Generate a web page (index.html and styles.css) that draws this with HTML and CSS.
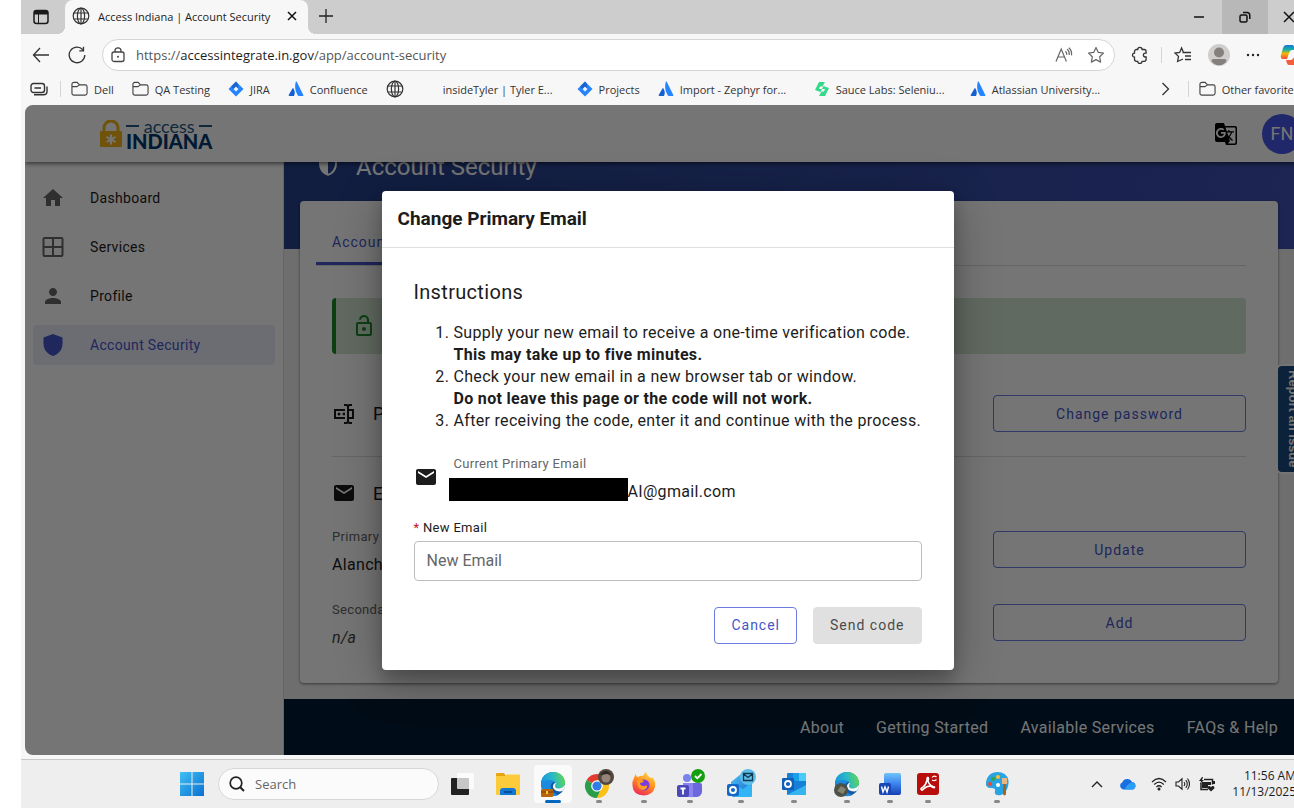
FILE: index.html
```
<!DOCTYPE html>
<html lang="en">
<head>
	<meta charset="UTF-8">
	<title>Access Indiana | Account Security</title>
	<link rel="stylesheet" href="styles.css">
</head>
<body>
	<!-- shared symbols -->
	<svg class="defs" aria-hidden="true">
		<symbol id="globe" viewBox="0 0 18 18"><g fill="none" stroke="#333" stroke-width="1.2"><circle cx="9" cy="9" r="7.8"/><ellipse cx="9" cy="9" rx="3.6" ry="7.8"/><path d="M9 1v16M1.8 6h14.4M1.8 12h14.4"/></g></symbol>
		<symbol id="folder" viewBox="0 0 18 16"><path d="M1 12.500V3a2 2 0 0 1 2-2h3.500l2.500 2.600h6a2 2 0 0 1 2 2v6.900a2 2 0 0 1-2 2H3a2 2 0 0 1-2-2zM1.200 5.500h5L9 3.600" fill="none" stroke="#444" stroke-width="1.200"/></symbol>
		<symbol id="jira" viewBox="0 0 16 16"><path fill="#2684ff" d="M8 .5 15.500 8 8 15.500.5 8zM8 5.500 5.500 8 8 10.500 10.500 8z" fill-rule="evenodd"/><path fill="#1558bc" d="M8 .5 10 3v4.500L8 5.500 5.500 8 3 5.500z" opacity=".7"/></symbol>
		<symbol id="atlas" viewBox="0 0 16 16"><path fill="#2684ff" d="M7.700 1c.3-.6.900-.6 1.200 0l6.400 13c.2.500 0 1-.600 1h-4c-.4 0-.6-.2-.8-.5C8.600 12 6 8 7.700 1z"/><path fill="#1560d0" d="M4.600 7.300c.3-.3.600-.2.800.1 1.600 2.300 1.700 4.600.8 7-.2.500-.5.600-.9.600H1.200c-.5 0-.7-.5-.5-.9z"/></symbol>
		<symbol id="mail" viewBox="0 0 24 24"><path fill="#1c1c1c" d="M20 4H4c-1.100 0-2 .9-2 2v12c0 1.100.9 2 2 2h16c1.100 0 2-.9 2-2V6c0-1.100-.9-2-2-2zm0 4l-8 5-8-5V6l8 5 8-5v2z"/></symbol>
		<symbol id="edge" viewBox="0 0 26 26">
			<linearGradient id="eg1" x1="0" x2="1" y1=".5" y2=".3"><stop offset="0" stop-color="#1597dc"/><stop offset=".5" stop-color="#28b8c8"/><stop offset="1" stop-color="#62d94e"/></linearGradient>
			<circle cx="13" cy="13" r="12" fill="#1459a8"/>
			<path fill="#1b8be0" d="M1 14c0-5 4-8 8-8 5 0 6 3 5 5-3 1-4 4-3 7s4 5 7 6C9 28 1 21 1 14z"/>
			<path fill="url(#eg1)" d="M1 13C1 6 6 1 13 1s12 5 12 10.500-4 6.500-7 6.500-4-1.500-3-3 .5-6-5-6S1 11 1 13z"/>
			<path fill="#f5f7f8" d="M15 12c1.500-1 .5 1 .2 2.500C14.500 17 17 18.500 21 17c2-.6 3.500-2 4-3.500.3 3-1 5-2.500 6.500-5 1.500-10-1.500-9.500-5 .2-1.500 1-2.300 2-3z"/>
		</symbol>
		<linearGradient id="win" x1="0" y1="0" x2="1" y2="1"><stop offset="0" stop-color="#3fc1f5"/><stop offset="1" stop-color="#0a6fd0"/></linearGradient>
		<linearGradient id="fox" x1=".8" y1="0" x2=".3" y2="1"><stop offset="0" stop-color="#ffe14a"/><stop offset=".5" stop-color="#ff8a1c"/><stop offset="1" stop-color="#f0285a"/></linearGradient>
		<linearGradient id="cop" x1="0" y1="0" x2="0" y2="1"><stop offset="0" stop-color="#1577d8"/><stop offset=".35" stop-color="#1bb3a0"/><stop offset=".6" stop-color="#f5b800"/><stop offset="1" stop-color="#ee4b3b"/></linearGradient>
		<linearGradient id="ol" x1="0" y1="0" x2="1" y2="1"><stop offset="0" stop-color="#4fc3f7"/><stop offset="1" stop-color="#1361c4"/></linearGradient>
		<linearGradient id="wd" x1="0" y1="0" x2="0" y2="1"><stop offset="0" stop-color="#6fc4f8"/><stop offset=".5" stop-color="#3b82f0"/><stop offset="1" stop-color="#1740b0"/></linearGradient>
	</svg>

	<div class="window">
		<header class="browser">
			<div class="tabstrip">
				<button class="icon-btn workspace" aria-label="Tab actions"><svg width="16" height="16" viewBox="0 0 16 16"><rect x="1" y="1.500" width="14" height="13" rx="2.500" fill="none" stroke="#1a1a1a" stroke-width="1.500"/><path d="M1 3.500Q1 1 3.500 1h9Q15 1 15 3.500V5.500H1z" fill="#1a1a1a"/><path d="M5.500 5v9" stroke="#1a1a1a"/></svg></button>
				<div class="tab">
					<svg width="18" height="18"><use href="#globe"/></svg>
					<span>Access Indiana | Account Security</span>
					<button class="icon-btn" aria-label="Close tab"><svg width="10" height="10" viewBox="0 0 10 10"><path d="M1 1l8 8M9 1L1 9" stroke="#111" stroke-width="1.500"/></svg></button>
				</div>
				<button class="icon-btn newtab" aria-label="New tab"><svg width="16" height="16" viewBox="0 0 16 16"><path d="M8 1v14M1 8h14" stroke="#222" stroke-width="1.300"/></svg></button>
				<div class="controls">
					<button aria-label="Minimize"><svg width="12" height="12" viewBox="0 0 12 12"><path d="M1 6h10" stroke="#111" stroke-width="1.500"/></svg></button>
					<button class="hover" aria-label="Restore"><svg width="12" height="12" viewBox="0 0 12 12"><g fill="none" stroke="#111" stroke-width="1.500"><rect x="1" y="4" width="7" height="7" rx="1.500"/><path d="M4 1.500h4A2.800 2.800 0 0 1 10.800 4.300V8"/></g></svg></button>
					<button class="close" aria-label="Close"><svg width="12" height="12" viewBox="0 0 12 12"><path d="M1 1l10 10M11 1L1 11" stroke="#111" stroke-width="1.500"/></svg></button>
				</div>
			</div>

			<div class="toolbar">
				<button class="icon-btn" aria-label="Back"><svg width="18" height="16" viewBox="0 0 18 16"><path d="M17 8H1.500M8 1L1.500 8 8 15" fill="none" stroke="#333" stroke-width="1.300"/></svg></button>
				<button class="icon-btn" aria-label="Refresh"><svg width="18" height="18" viewBox="0 0 18 18"><path d="M16.800 9A7.800 7.800 0 1 1 14.800 3.700M15.500.8v4h-4.200" fill="none" stroke="#333" stroke-width="1.300"/></svg></button>
				<div class="address">
					<svg width="14" height="16" viewBox="0 0 14 16"><g fill="none" stroke="#444" stroke-width="1.300"><rect x="1" y="5" width="12" height="9.500" rx="2"/><path d="M4 5V3.800a3 3 0 0 1 6 0V5"/></g><circle cx="7" cy="9.800" r="1" fill="#444"/></svg>
					<a class="url" href="#">https://<b>accessintegrate.in.gov</b>/app/account-security</a>
					<button class="icon-btn" aria-label="Read aloud"><svg width="18" height="16" viewBox="0 0 18 16"><g fill="none" stroke="#666" stroke-width="1.200"><path d="M1 14.500L6.200 2 11.400 14.500M3 10h6.500M10.500 4.200q1.500 1.400 1.200 3.600M12.200 2.200q2.600 2.600 2 5.800M13.800.8q3.400 3 2.700 7.500"/></g></svg></button>
					<button class="icon-btn" aria-label="Favorite"><svg width="18" height="18" viewBox="0 0 18 18"><path d="M9 1.500l2.300 4.900 5.200.7-3.800 3.700.9 5.300L9 13.600l-4.600 2.500.9-5.300L1.500 7.100l5.200-.7z" fill="none" stroke="#666" stroke-width="1.200" stroke-linejoin="round"/></svg></button>
				</div>
				<button class="icon-btn" aria-label="Extensions"><svg width="18" height="18" viewBox="0 0 18 18"><path d="M5.500 3.500h1.200a2.200 2.200 0 0 1 4.400 0h2a2 2 0 0 1 2 2V7.200h-.8a1.900 1.900 0 0 0 0 3.800h.8v2.300a2 2 0 0 1-2 2h-2a2.200 2.200 0 0 1-4.400 0H5.500a2 2 0 0 1-2-2v-2.100a2 2 0 0 1 0-4V5.500a2 2 0 0 1 2-2z" fill="none" stroke="#333" stroke-width="1.300"/></svg></button>
				<i class="sep"></i>
				<button class="icon-btn" aria-label="Favorites list"><svg width="18" height="18" viewBox="0 0 18 18"><path d="M9.500 6.500L7.600 2 5.700 6.400 1 7l3.500 3.400-.9 5.100L9 13M8.500 6.500H17M11 10h6M11 13.500h6" fill="none" stroke="#333" stroke-width="1.300"/></svg></button>
				<button class="icon-btn" aria-label="User profile"><svg width="22" height="22" viewBox="0 0 22 22"><circle cx="11" cy="11" r="11" fill="#d0cecc"/><circle cx="11" cy="8.500" r="5" fill="#85807e"/><path d="M3.500 17q0-2 2-2h11q2 0 2 2-2 4-7.500 4.300Q5.500 21 3.500 17z" fill="#85807e"/></svg></button>
				<button class="icon-btn" aria-label="More"><svg width="14" height="4" viewBox="0 0 14 4"><g fill="#222"><circle cx="2" cy="2" r="1.200"/><circle cx="7" cy="2" r="1.200"/><circle cx="12" cy="2" r="1.200"/></g></svg></button>
				<button class="icon-btn copilot" aria-label="Copilot"><svg width="22" height="22" viewBox="0 0 22 22"><path d="M6 1h7l3 5h-4q-2 0-3 3l-2 6H3Q0 15 1 11l2-7q1-3 3-3z" fill="url(#cop)"/><path d="M6 16h5q2 0 3-3l2-6h3q3 0 2 4l-2 7q-1 3-3 3H9q-2 0-3-5z" fill="#f0603c"/></svg></button>
			</div>

			<nav class="bookmarks">
				<button class="icon-btn" aria-label="Workspaces"><svg width="18" height="14" viewBox="0 0 18 14"><g fill="none" stroke="#333" stroke-width="1.400"><rect x="1" y="1.500" width="13.500" height="9" rx="2.500"/><path d="M4.500 6h6.500M4 12.700h9.500q3.500 0 3.500-3.200V4.500"/></g></svg></button>
				<i class="sep"></i>
				<a href="#"><svg width="17" height="16"><use href="#folder"/></svg>Dell</a>
				<a href="#"><svg width="17" height="16"><use href="#folder"/></svg>QA Testing</a>
				<a href="#"><svg width="16" height="16"><use href="#jira"/></svg>JIRA</a>
				<a href="#"><svg width="16" height="16"><use href="#atlas"/></svg>Confluence</a>
				<a href="#" aria-label="Web page"><svg width="18" height="18"><use href="#globe"/></svg></a>
				<a href="#" class="plain">insideTyler | Tyler E...</a>
				<a href="#"><svg width="16" height="16"><use href="#jira"/></svg>Projects</a>
				<a href="#" class="wide"><svg width="16" height="16"><use href="#atlas"/></svg>Import - Zephyr for...</a>
				<a href="#" class="wide"><svg width="16" height="16" viewBox="0 0 16 16"><g fill="#35d98a"><path d="M5 1h6L8.500 5.500H6L5 8h3L6.500 11 1 9z"/><path d="M11 15H5l2.500-4.500H10L11 8H8l1.500-3L15 7z"/></g></svg>Sauce Labs: Seleniu...</a>
				<a href="#" class="wide"><svg width="16" height="16"><use href="#atlas"/></svg>Atlassian University...</a>
				<button class="icon-btn more" aria-label="More favorites"><svg width="9" height="14" viewBox="0 0 9 14"><path d="M1.500 1L7.500 7l-6 6" fill="none" stroke="#333" stroke-width="1.300"/></svg></button>
				<i class="sep"></i>
				<a href="#"><svg width="17" height="16"><use href="#folder"/></svg>Other favorites</a>
			</nav>
		</header>

		<div class="app">
			<header class="app-header">
				<a class="logo" href="#">
					<svg width="22" height="28" viewBox="0 0 22 28"><path d="M4 12V8a7 7 0 0 1 14 0v4" fill="none" stroke="#f4b41a" stroke-width="3"/><rect y="11" width="22" height="16" rx="1" fill="#f4b41a"/><path d="M11 14.500v10M6.500 16.800l9 5.200M15.500 16.800l-9 5.200" stroke="#fff" stroke-width="2"/></svg>
					<span class="logo-text"><span class="access">access</span><span class="indiana">INDIANA</span></span>
				</a>
				<button class="icon-btn translate" aria-label="Translate"><svg width="24" height="24" viewBox="0 0 24 24"><path d="M21 4H11l-1-3H3c-1.100 0-2 .9-2 2v15c0 1.100.9 2 2 2h8l1 3h9c1.100 0 2-.9 2-2V6c0-1.100-.9-2-2-2zM7 16c-2.760 0-5-2.240-5-5s2.240-5 5-5c1.350 0 2.480.5 3.350 1.300L9.030 8.570c-.38-.36-1.040-.78-2.030-.78-1.740 0-3.150 1.440-3.150 3.210S5.260 14.210 7 14.210c2.010 0 2.840-1.440 2.920-2.410H7v-1.710h4.680c.07.31.12.61.12 1.020C11.800 13.970 9.890 16 7 16zm6.170-5.420h3.700c-.43 1.250-1.110 2.430-2.050 3.470-.31-.35-.6-.72-.86-1.100l-.79-2.370zm8.330 9.920c0 .55-.45 1-1 1H14l2-2.500-1.040-3.100 3.100 3.100.92-.92-3.300-3.250.02-.02c1.130-1.250 1.930-2.690 2.400-4.220H20v-1.300h-4.530V8h-1.290v1.290h-1.440L11.460 5.500h9.040c.55 0 1 .45 1 1v14z"/></svg></button>
				<button class="avatar">FN</button>
			</header>

			<div class="layout">
				<nav class="sidebar">
					<a href="#"><svg width="24" height="24" viewBox="0 0 24 24"><path d="M10 20v-6h4v6h5v-8h3L12 3 2 12h3v8z"/></svg>Dashboard</a>
					<a href="#"><svg width="24" height="24" viewBox="0 0 24 24"><path d="M3.500 3h17q1 0 1 1v16q0 1-1 1h-17q-1 0-1-1V4q0-1 1-1zM12 3v18M2.500 12h19" fill="none" stroke="#666" stroke-width="2"/></svg>Services</a>
					<a href="#"><svg width="24" height="24" viewBox="0 0 24 24"><path d="M12 12c2.210 0 4-1.790 4-4s-1.790-4-4-4-4 1.790-4 4 1.790 4 4 4zm0 2c-2.670 0-8 1.340-8 4v2h16v-2c0-2.660-5.330-4-8-4z"/></svg>Profile</a>
					<a href="#" class="active"><svg width="24" height="24" viewBox="0 0 24 24"><path d="M12 1 2.500 4.500V11c0 5.550 4.300 10.740 9.500 12 5.200-1.260 9.500-6.450 9.500-12V4.500z"/></svg>Account Security</a>
				</nav>

				<div class="content">
					<main class="page">
						<div class="hero">
							<svg width="24" height="24" viewBox="0 0 24 24"><path d="M12 2.200 4 5.600V11c0 5 3.400 9.600 8 10.800 4.600-1.200 8-5.800 8-10.800V5.600z" fill="none" stroke="#fff" stroke-width="2"/><path d="M12 2v20C7 20.500 4 16 4 11V5.500z" fill="#fff"/></svg>
							<h1>Account Security</h1>
						</div>
						<section class="card">
							<div class="tabs"><button class="tab-link">Account</button></div>
							<div class="card-body">
								<div class="alert"><svg width="24" height="24" viewBox="0 0 24 24"><path d="M12 17c1.100 0 2-.9 2-2s-.9-2-2-2-2 .9-2 2 .9 2 2 2zm6-9h-1V6c0-2.760-2.240-5-5-5-2.280 0-4.270 1.540-4.840 3.750-.14.54.18 1.080.72 1.220.53.14 1.080-.18 1.220-.72C9.440 3.930 10.630 3 12 3c1.650 0 3 1.350 3 3v2H6c-1.100 0-2 .9-2 2v10c0 1.100.9 2 2 2h12c1.100 0 2-.9 2-2V10c0-1.100-.9-2-2-2zm0 12H6V10h12v10z"/></svg></div>
								<div class="row password">
									<h2><svg width="24" height="24" viewBox="0 0 24 24"><path fill="#1c1c1c" d="M17,7H22V17H17V19A1,1 0 0,0 18,20H20V22H17.500C16.950,22 16,21.550 16,21C16,21.550 15.050,22 14.500,22H12V20H14A1,1 0 0,0 15,19V5A1,1 0 0,0 14,4H12V2H14.500C15.050,2 16,2.450 16,3C16,2.450 16.950,2 17.500,2H20V4H18A1,1 0 0,0 17,5V7M2,7H13V9H4V15H13V17H2V7M20,15V9H17V15H20M8.500,12A1.500,1.500 0 0,0 7,10.500A1.500,1.500 0 0,0 5.500,12A1.500,1.500 0 0,0 7,13.500A1.500,1.500 0 0,0 8.500,12M13,10.890C12.390,10.330 11.440,10.380 10.880,11C10.320,11.600 10.370,12.550 11,13.110C11.550,13.630 12.430,13.630 13,13.110V10.890Z"/></svg>Password</h2>
									<button class="btn">Change password</button>
								</div>
								<h2 class="email-title"><svg width="24" height="24"><use href="#mail"/></svg>Email</h2>
								<div class="row contact">
									<dl><dt>Primary</dt><dd>Alanch</dd></dl>
									<button class="btn">Update</button>
								</div>
								<div class="row contact">
									<dl><dt>Secondary</dt><dd class="none">n/a</dd></dl>
									<button class="btn">Add</button>
								</div>
							</div>
						</section>
					</main>
					<footer class="footer">
						<a href="#">About</a>
						<a href="#">Getting Started</a>
						<a href="#">Available Services</a>
						<a href="#">FAQs &amp; Help</a>
					</footer>
				</div>
			</div>

			<button class="report">Report an issue</button>

			<div class="backdrop">
				<form class="modal" role="dialog" aria-labelledby="modal-title">
					<h2 id="modal-title">Change Primary Email</h2>
					<div class="modal-body">
						<h3>Instructions</h3>
						<ol>
							<li>Supply your new email to receive a one-time verification code.<br><b>This may take up to five minutes.</b></li>
							<li>Check your new email in a new browser tab or window.<br><b>Do not leave this page or the code will not work.</b></li>
							<li>After receiving the code, enter it and continue with the process.</li>
						</ol>
						<div class="current">
							<svg width="24" height="24"><use href="#mail"/></svg>
							<div>
								<p class="caption">Current Primary Email</p>
								<p class="value"><span class="redacted"></span>AI@gmail.com</p>
							</div>
						</div>
						<label for="new-email"><span class="req">*</span> New Email</label>
						<input id="new-email" type="email" placeholder="New Email">
						<div class="actions">
							<button type="button" class="btn">Cancel</button>
							<button type="submit" class="btn disabled" disabled>Send code</button>
						</div>
					</div>
				</form>
			</div>
		</div>

		<footer class="taskbar">
			<button class="icon-btn start" aria-label="Start"><svg width="24" height="24" viewBox="0 0 24 24"><path fill="url(#win)" d="M0 0h11.500v11.500H0zM12.500 0H24v11.500H12.500zM0 12.500h11.500V24H0zM12.500 12.500H24V24H12.500z"/></svg></button>
			<label class="search">
				<svg width="16" height="16" viewBox="0 0 16 16"><circle cx="7" cy="7" r="5.800" fill="none" stroke="#222" stroke-width="1.700"/><path d="M11.200 11.200L15 15" stroke="#222" stroke-width="2"/></svg>
				<input type="text" placeholder="Search" aria-label="Search">
			</label>
			<div class="apps">
				<button aria-label="Task view"><svg width="26" height="26" viewBox="0 0 26 26"><rect x="2" y="7" width="18" height="17" rx="1" fill="#222"/><rect x="8" y="2" width="17" height="16" rx="1" fill="#fff" opacity=".75"/></svg></button>
				<button aria-label="File Explorer"><svg width="26" height="26" viewBox="0 0 26 26"><path fill="#e5a50f" d="M1 3q0-1 1-1h7l2 3H1z"/><path fill="#fccb3c" d="M1 5h9l2-1.500h12q1 0 1 1V23q0 1-1 1H2q-1 0-1-1z"/><path fill="#1278d4" d="M5 24v-4q0-3 3-3h10q3 0 3 3v4z"/><path fill="#0a4d9c" d="M9 20h8v2H9z"/></svg></button>
				<button class="open active" aria-label="Microsoft Edge"><svg width="26" height="26" viewBox="0 0 26 26"><use href="#edge"/><rect x="1" y="18" width="12" height="8" rx="1" fill="#b8660d"/><path d="M1 21h12" stroke="#7b3f05"/><path d="M7 20v3" stroke="#ffc83d" stroke-width="2"/></svg></button>
				<button class="open" aria-label="Google Chrome"><svg width="30" height="30" viewBox="0 0 30 30"><path fill="#e33b2e" d="M13 17L2.600 11A12 12 0 0 1 23.400 11z"/><path fill="#2a9d4a" d="M13 17L2.600 11A12 12 0 0 0 13 29l5-9z"/><path fill="#fbc116" d="M13 17h5l-5 12A12 12 0 0 0 23.400 11H13z"/><circle cx="13" cy="17" r="5.800" fill="#fff"/><circle cx="13" cy="17" r="4.600" fill="#2f7de9"/><circle cx="22" cy="8" r="8" fill="#51473f"/><circle cx="22" cy="9" r="4.500" fill="#948377"/><path d="M16 6q6-8 11 0l-4-1z" fill="#2c2724"/></svg></button>
				<button class="open" aria-label="Firefox"><svg width="26" height="26" viewBox="0 0 26 26"><path fill="url(#fox)" d="M3 7q1-3 2-4 0 3 2 3 3-2 5-1 1-3 3-4 1 4 5 6 1 1 1-1 4 4 3 10-2 8-11 8.500Q2 24 1.500 15 1 10 3 7z"/><circle cx="13" cy="14" r="5.500" fill="#7a3be0"/><path d="M6 9q3-2 7 1-1 2-4 2 0 3 4 3 3 0 3-2 1 6-5 6-5-1-5-10z" fill="#ff9b22"/></svg></button>
				<button class="open" aria-label="Teams"><svg width="30" height="30" viewBox="0 0 30 30"><circle cx="12" cy="9" r="4" fill="#7b83eb"/><path d="M8 14h17q2 0 2 2v7q-1 5-6 5h-8q-5-1-5-6z" fill="#6b67dc"/><path d="M8 14h10v14q-9 1-10-6z" fill="#8a84f2"/><rect x="2" y="16" width="12" height="12" rx="2" fill="#4b48b8"/><path d="M5.500 19.500h5M8 19.500v6" stroke="#fff" stroke-width="1.800"/><circle cx="23" cy="7" r="7" fill="#12a010"/><path d="M20 7l2.300 2.300L26.500 5" fill="none" stroke="#fff" stroke-width="1.800"/></svg></button>
				<button class="open" aria-label="Outlook (new)"><svg width="30" height="30" viewBox="0 0 30 30"><path d="M5 13L15 5l11 8v13q0 2-2 2H8q-3 0-3-3z" fill="url(#ol)"/><path d="M5 14l12 6 9-7v13q0 2-2 2H9z" fill="#33b5f5"/><rect x="1" y="15" width="12" height="12" rx="2" fill="#1468c7"/><circle cx="7" cy="21" r="3" fill="none" stroke="#fff" stroke-width="1.800"/><circle cx="22" cy="8" r="8" fill="#5bbde8"/><path d="M17.500 4.500h9v7h-9zM17.500 5l4.500 3.500L26.500 5" fill="none" stroke="#12394f" stroke-width="1.300"/></svg></button>
				<button class="open" aria-label="Outlook"><svg width="26" height="26" viewBox="0 0 26 26"><rect x="6" y="2" width="19" height="22" rx="1" fill="#1680d8"/><path d="M12 2h6v8h-6z" fill="#1aa0e8"/><path d="M18 2h7v8h-7z" fill="#4bcaf8"/><path d="M6 24l19-10v9q0 1-1 1z" fill="#35b5f0"/><rect x="1" y="7" width="12" height="12" rx="1" fill="#1060b8"/><circle cx="7" cy="13" r="3" fill="none" stroke="#fff" stroke-width="1.800"/></svg></button>
				<button class="open" aria-label="Edge profile"><svg width="26" height="26" viewBox="0 0 26 26"><use href="#edge"/><circle cx="7" cy="19" r="7" fill="#4c5148"/><path d="M3 20l4-5 5 3-3 5z" fill="#85826f"/></svg></button>
				<button class="open" aria-label="Word"><svg width="24" height="26" viewBox="0 0 24 26"><rect x="6" y="2" width="17" height="22" rx="2" fill="url(#wd)"/><rect x="1" y="12" width="12" height="12" rx="2" fill="#1746b5"/><path d="M3.500 15.500l1.500 5.500 2-5 2 5 1.500-5.500" fill="none" stroke="#fff" stroke-width="1.400"/></svg></button>
				<button class="open" aria-label="Acrobat"><svg width="24" height="26" viewBox="0 0 24 26"><rect x="1" y="2" width="22" height="22" rx="3" fill="#b80d0a"/><path d="M5.500 19q-1.500-1 1-2.500Q10 14 11 9q0-3 1-2.500 1 .5 0 3.500 1 4 5 5.500 2 0 1.500 1-1 1-4-1.500-4 0-7 3-1 1.500-2 1z" fill="none" stroke="#fff" stroke-width="1.500"/><path d="M16 6.500q2-2.500 4.500-.5M20.500 8.500q-2 2-4.500.5" fill="none" stroke="#fff" stroke-width="1.200"/></svg></button>
				<button class="open paint" aria-label="Paint"><svg width="26" height="26" viewBox="0 0 26 26"><path d="M13 1q10 0 11.500 8.500Q25 15 22 20q-3 5-9 4-3-1-2-4t-4-3q-6 0-5-6Q4 1 13 1z" fill="#28a4e2"/><circle cx="9" cy="8" r="2" fill="#35a545"/><circle cx="14" cy="6" r="2" fill="#f8c32b"/><circle cx="6" cy="13" r="2" fill="#e94832"/><circle cx="14" cy="14" r="2" fill="#fff"/><path d="M19 13h3v10q-1.500 3-3 0z" fill="#a9611c"/><path d="M18 7h5v6h-5z" fill="#e7b784"/></svg></button>
			</div>
			<div class="tray">
				<button class="icon-btn" aria-label="Show hidden icons"><svg width="12" height="8" viewBox="0 0 12 8"><path d="M1 7l5-5 5 5" fill="none" stroke="#222" stroke-width="1.400"/></svg></button>
				<button class="icon-btn cloud" aria-label="OneDrive"><svg width="18" height="12" viewBox="0 0 18 12"><path d="M4 11.500a3.800 3.800 0 0 1-.6-7.200A5.300 5.300 0 0 1 13 4a3.900 3.900 0 0 1 1 7.500z" fill="#1a6fe0"/><path d="M6 11.500q1-5 7-7.500a3.900 3.900 0 0 1 1 7.500z" fill="#2c9df2"/></svg></button>
				<button class="icon-btn" aria-label="Wi-Fi"><svg width="16" height="14" viewBox="0 0 16 14"><g fill="none" stroke="#222" stroke-width="1.200"><path d="M1 5q7-7 14 0M3.200 7.500q4.800-4.800 9.600 0M5.400 10q2.600-2.500 5.200 0"/></g><circle cx="8" cy="12" r="1.500" fill="#222"/></svg></button>
				<button class="icon-btn" aria-label="Volume"><svg width="15" height="14" viewBox="0 0 15 14"><path d="M1 5h2.500L7 1.800v10.400L3.500 9H1zM9 5q1.500 2 0 4M10.800 3.200q3 3.800 0 7.600M12.500 1.500q4 5.500 0 11" fill="none" stroke="#222" stroke-width="1.100"/></svg></button>
				<button class="icon-btn" aria-label="Battery"><svg width="18" height="16" viewBox="0 0 18 16"><path d="M6 3.500h8.500v5M3 7v6.500h7" fill="none" stroke="#222" stroke-width="1.500"/><path d="M4 1L1 5h2L2 8l4-4H4L5 1zM4 6h9v3H10v3H4zM13 15.500l-3.500-3.300q0-2.700 2-2.200l1.500 1 1.500-1q2-.5 2 2.200zM14.500 5H17v3h-2z" fill="#222"/></svg></button>
				<p class="clock">11:56 AM<br>11/13/2025</p>
			</div>
		</footer>
	</div>
</body>
</html>
```
FILE: styles.css
```
* {
	box-sizing: border-box;
	margin: 0;
	padding: 0;
}
body {
	overflow: hidden;
	background: #fff;
	font-family: Roboto, "Liberation Sans", sans-serif;
	font-size: 16px;
	color: #1c1c1c;
}
svg {
	display: block;
	flex: none;
}
a {
	color: inherit;
	text-decoration: none;
}
button {
	font-family: inherit;
	background: none;
	border: none;
	cursor: pointer;
}
.defs {
	position: absolute;
	width: 0;
	height: 0;
}
.icon-btn {
	display: flex;
	flex: none;
	align-items: center;
	justify-content: center;
}

/* the window runs a little past the right edge of the screen */
.window {
	display: flex;
	flex-direction: column;
	min-height: 100vh;
	margin: 0 -16px 0 21px;
	background: #f7f7f7;
}

/* browser */
.browser,
.taskbar {
	font-family: "Open Sans", "Noto Sans", sans-serif;
	font-size: 11px;
}
.tabstrip {
	display: flex;
	height: 34px;
	background: #cdcdcd;
}
.workspace {
	width: 44px;
	padding-right: 4px;
}
.tab {
	position: relative;
	display: flex;
	align-items: center;
	gap: 8px;
	width: 243px;
	padding: 0 11px 2px 7px;
	background: #f7f7f7;
	border-radius: 8px 8px 0 0;
	white-space: nowrap;
}
.tab:before,
.tab:after {
	content: "";
	position: absolute;
	bottom: 0;
	width: 8px;
	height: 8px;
}
.tab:before {
	right: 100%;
	background: radial-gradient(circle at 0 0, transparent 8px, #f7f7f7 8px);
}
.tab:after {
	left: 100%;
	background: radial-gradient(circle at 100% 0, transparent 8px, #f7f7f7 8px);
}
.tab .icon-btn {
	margin-left: auto;
}
.newtab {
	width: 36px;
	padding-bottom: 2px;
}
.controls {
	display: flex;
	margin-left: auto;
}
.controls button {
	display: flex;
	align-items: center;
	justify-content: center;
	width: 46px;
}
.controls .hover {
	background: #b8b8b8;
}
.controls .close {
	width: 42px;
}
.toolbar {
	display: flex;
	align-items: center;
	gap: 16px;
	height: 41px;
	padding: 0 8px 0 11px;
}
.toolbar > .icon-btn:nth-child(2) {
	margin-left: 2px;
}
.sep {
	width: 1px;
	height: 16px;
	margin: 0 -4px;
	background: #d4d4d4;
}
.address {
	display: flex;
	flex: 1;
	align-items: center;
	gap: 11px;
	height: 32px;
	padding: 0 9px 0 8px;
	background: #fff;
	border: 1px solid #d5d5d5;
	border-radius: 16px;
}
.address .icon-btn {
	margin-left: 3px;
}
.url {
	flex: 1;
	font-size: 13px;
	color: #555;
}
.url b {
	font-weight: 400;
	color: #1c1c1c;
}
.toolbar .copilot {
	margin-left: 4px;
}
.bookmarks {
	display: flex;
	align-items: center;
	gap: 18px;
	height: 30px;
	padding: 0 11px 2px 9px;
	color: #333;
	white-space: nowrap;
}
.bookmarks .sep {
	margin: 0 -8px 0 -6px;
}
.bookmarks a {
	display: flex;
	align-items: center;
	gap: 6px;
}
.bookmarks .plain {
	margin-left: 21px;
	margin-right: 6px;
}
.bookmarks .wide {
	width: 138px;
}
.bookmarks .more {
	margin-left: auto;
	margin-right: 6px;
}

/* app */
.app {
	position: relative;
	display: flex;
	flex: 1;
	flex-direction: column;
	overflow: hidden;
	margin: 0 0 4px 4px;
	background: #f0f0f0;
	border-radius: 8px;
	letter-spacing: .02em;
}
.app-header {
	z-index: 1;
	display: flex;
	align-items: center;
	height: 57px;
	padding: 0 8px 0 75px;
	background: #fff;
	box-shadow: 0 2px 4px rgba(0,0,0,.5);
}
.logo {
	display: flex;
	align-items: center;
	gap: 4px;
	margin-right: auto;
	font-family: Lato, sans-serif;
	letter-spacing: 0;
	color: #003a70;
}
.logo-text {
	display: flex;
	flex-direction: column;
}
.access {
	display: flex;
	align-items: center;
	justify-content: space-between;
	font-size: 18px;
	line-height: 15px;
	color: #1f5a86;
}
.access:before,
.access:after {
	content: "";
	width: 13px;
	height: 2px;
	background: #1f5a86;
}
.indiana {
	font-size: 20px;
	font-weight: 900;
	line-height: 15px;
}
.translate {
	margin-right: 24px;
}
.avatar {
	width: 40px;
	height: 40px;
	background: #4656e6;
	border-radius: 50%;
	color: #fff;
	font-size: 18px;
}
.layout {
	display: flex;
	flex: 1;
}
.sidebar {
	display: flex;
	flex: none;
	flex-direction: column;
	gap: 9px;
	width: 259px;
	padding: 16px 8px;
	background: #fff;
	border-right: 1px solid #ddd;
}
.sidebar a {
	display: flex;
	align-items: center;
	gap: 25px;
	height: 40px;
	padding: 0 8px;
	border-radius: 4px;
	font-size: 14px;
}
.sidebar svg {
	fill: #666;
}
.sidebar .active {
	background: #ebeefb;
	color: #4555c8;
}
.sidebar .active svg {
	fill: #4555c8;
}
.content {
	display: flex;
	flex: 1;
	flex-direction: column;
	min-width: 0;
}
.page {
	flex: 1;
	padding-bottom: 16px;
}
.hero {
	display: flex;
	align-items: flex-start;
	gap: 16px;
	height: 87px;
	padding-left: 32px;
	background: linear-gradient(90deg, #25428c, #3f51b5);
	color: #fff;
}
.hero svg,
.hero h1 {
	margin-top: -9px;
}
.hero h1 {
	font-size: 24px;
	font-weight: 400;
	line-height: 28px;
	letter-spacing: 0;
}
.card {
	margin: -48px 32px 0 16px;
	background: #fff;
	border-radius: 4px;
	box-shadow: 0 1px 3px rgba(0,0,0,.5);
}
.tabs {
	display: flex;
	margin: 0 32px 0 16px;
	padding-top: 16px;
	border-bottom: 1px solid #ddd;
}
.tab-link {
	height: 48px;
	padding: 4px 16px 0;
	border-bottom: 3px solid #4555c8;
	color: #4555c8;
	font-size: 14px;
	letter-spacing: 1px;
}
.card-body {
	padding: 32px 32px 29px;
}
.alert {
	display: flex;
	align-items: center;
	height: 56px;
	padding: 0 16px;
	background: #d3e8d3;
	border-left: 4px solid #1f8a2b;
	border-radius: 4px;
}
.alert svg {
	fill: #1f8a2b;
}
.row {
	display: flex;
	align-items: center;
	justify-content: space-between;
}
.row .btn {
	width: 253px;
}
.password {
	padding: 41px 0 24px;
	border-bottom: 1px solid #ddd;
}
.contact {
	align-items: flex-start;
}
.contact + .contact {
	margin-top: 17px;
}
.contact .btn {
	margin-top: 6px;
}
.card h2 {
	display: flex;
	align-items: center;
	gap: 17px;
	font-size: 18px;
	font-weight: 400;
}
.card .email-title {
	margin: 24px 0 20px;
}
dt {
	color: #666;
	font-size: 13px;
	line-height: 24px;
}
dd {
	line-height: 32px;
}
.none {
	color: #444;
	font-style: italic;
}
.btn {
	height: 37px;
	padding: 0 16px;
	border: 1px solid #6a7ce0;
	border-radius: 4px;
	color: #4555c8;
	font-size: 14px;
	letter-spacing: 1px;
}
.footer {
	display: flex;
	align-items: center;
	justify-content: flex-end;
	gap: 32px;
	height: 56px;
	padding-right: 32px;
	background: #001c34;
	color: #fff;
}
.report {
	position: absolute;
	top: 259px;
	right: 0;
	width: 34px;
	height: 110px;
	background: #1a4a7f;
	border: 2px solid #fff;
	border-radius: 6px 0 0 6px;
	color: #fff;
	font-family: "Liberation Sans", sans-serif;
	font-size: 13px;
	font-weight: 700;
	writing-mode: vertical-rl;
}

/* dialog */
.backdrop {
	z-index: 2;
	position: absolute;
	top: 0;
	right: 0;
	bottom: 0;
	left: 0;
	display: flex;
	align-items: center;
	justify-content: center;
	background: rgba(0,0,0,.54);
}
.modal {
	width: 572px;
	background: #fff;
	border-radius: 4px;
	box-shadow: 0 11px 15px rgba(0,0,0,.2), 0 9px 46px rgba(0,0,0,.3);
}
.modal h2 {
	padding: 0 16px;
	border-bottom: 1px solid #e0e0e0;
	font-size: 19px;
	font-weight: 700;
	line-height: 56px;
	letter-spacing: 0;
}
.modal-body {
	padding: 32px 32px 26px;
}
.modal h3 {
	font-size: 20px;
	font-weight: 400;
	line-height: 24px;
}
.modal ol {
	margin-top: 18px;
	padding-left: 40px;
	line-height: 22px;
}
.current {
	display: flex;
	align-items: center;
	gap: 16px;
	margin-top: 22px;
}
.caption {
	color: #666;
	font-size: 13px;
	line-height: 20px;
}
.value {
	display: flex;
	align-items: flex-end;
	margin-top: 4px;
	margin-left: -5px;
	line-height: 18px;
}
.redacted {
	width: 179px;
	height: 23px;
	background: #000;
}
.modal label {
	display: block;
	margin: 17px 0 3px;
	font-size: 13px;
	line-height: 20px;
}
.req {
	color: #c8102e;
}
.modal input {
	width: 100%;
	height: 40px;
	padding: 0 12px;
	border: 1px solid #bdbdbd;
	border-radius: 4px;
	font-family: inherit;
	font-size: 16px;
}
input::placeholder {
	color: #666;
	opacity: 1;
}
.actions {
	display: flex;
	justify-content: flex-end;
	gap: 16px;
	margin-top: 26px;
}
.disabled {
	background: #e0e0e0;
	border-color: #e0e0e0;
	color: #4a4a4a;
}

/* taskbar */
.taskbar {
	display: flex;
	align-items: center;
	height: 49px;
	padding: 0 14px 0 159px;
	background: #eee;
	border-top: 1px solid #c8c8c8;
}
.search {
	display: flex;
	align-items: center;
	gap: 10px;
	width: 221px;
	height: 32px;
	margin-left: 14px;
	padding: 0 10px;
	background: #fbfbfb;
	border: 1px solid #d8d8d8;
	border-radius: 16px;
}
.search input {
	width: 100%;
	background: none;
	border: none;
	font-family: inherit;
	font-size: 13px;
}
.apps {
	display: grid;
	grid-template-columns: 46px 46px 44px 47px 43px 50px 52px 54px 51px 36px 40px 98px;
}
.apps button {
	position: relative;
	display: flex;
	align-items: center;
	justify-content: center;
	height: 48px;
}
.open:after {
	content: "";
	position: absolute;
	bottom: 5px;
	left: 50%;
	width: 6px;
	height: 3px;
	margin-left: -3px;
	background: #888;
	border-radius: 2px;
}
.apps .active {
	height: 38px;
	margin: 5px 3px;
	background: #fafafa;
	border-radius: 4px;
}
.active.open:after {
	bottom: 0;
	width: 16px;
	margin-left: -8px;
	background: #0067c0;
}
.tray {
	display: flex;
	align-items: center;
	gap: 8px;
	margin-left: auto;
}
.cloud {
	margin: 0 6px 0 8px;
}
.clock {
	margin-left: 8px;
	font-size: 12px;
	line-height: 16px;
	text-align: right;
}
```
